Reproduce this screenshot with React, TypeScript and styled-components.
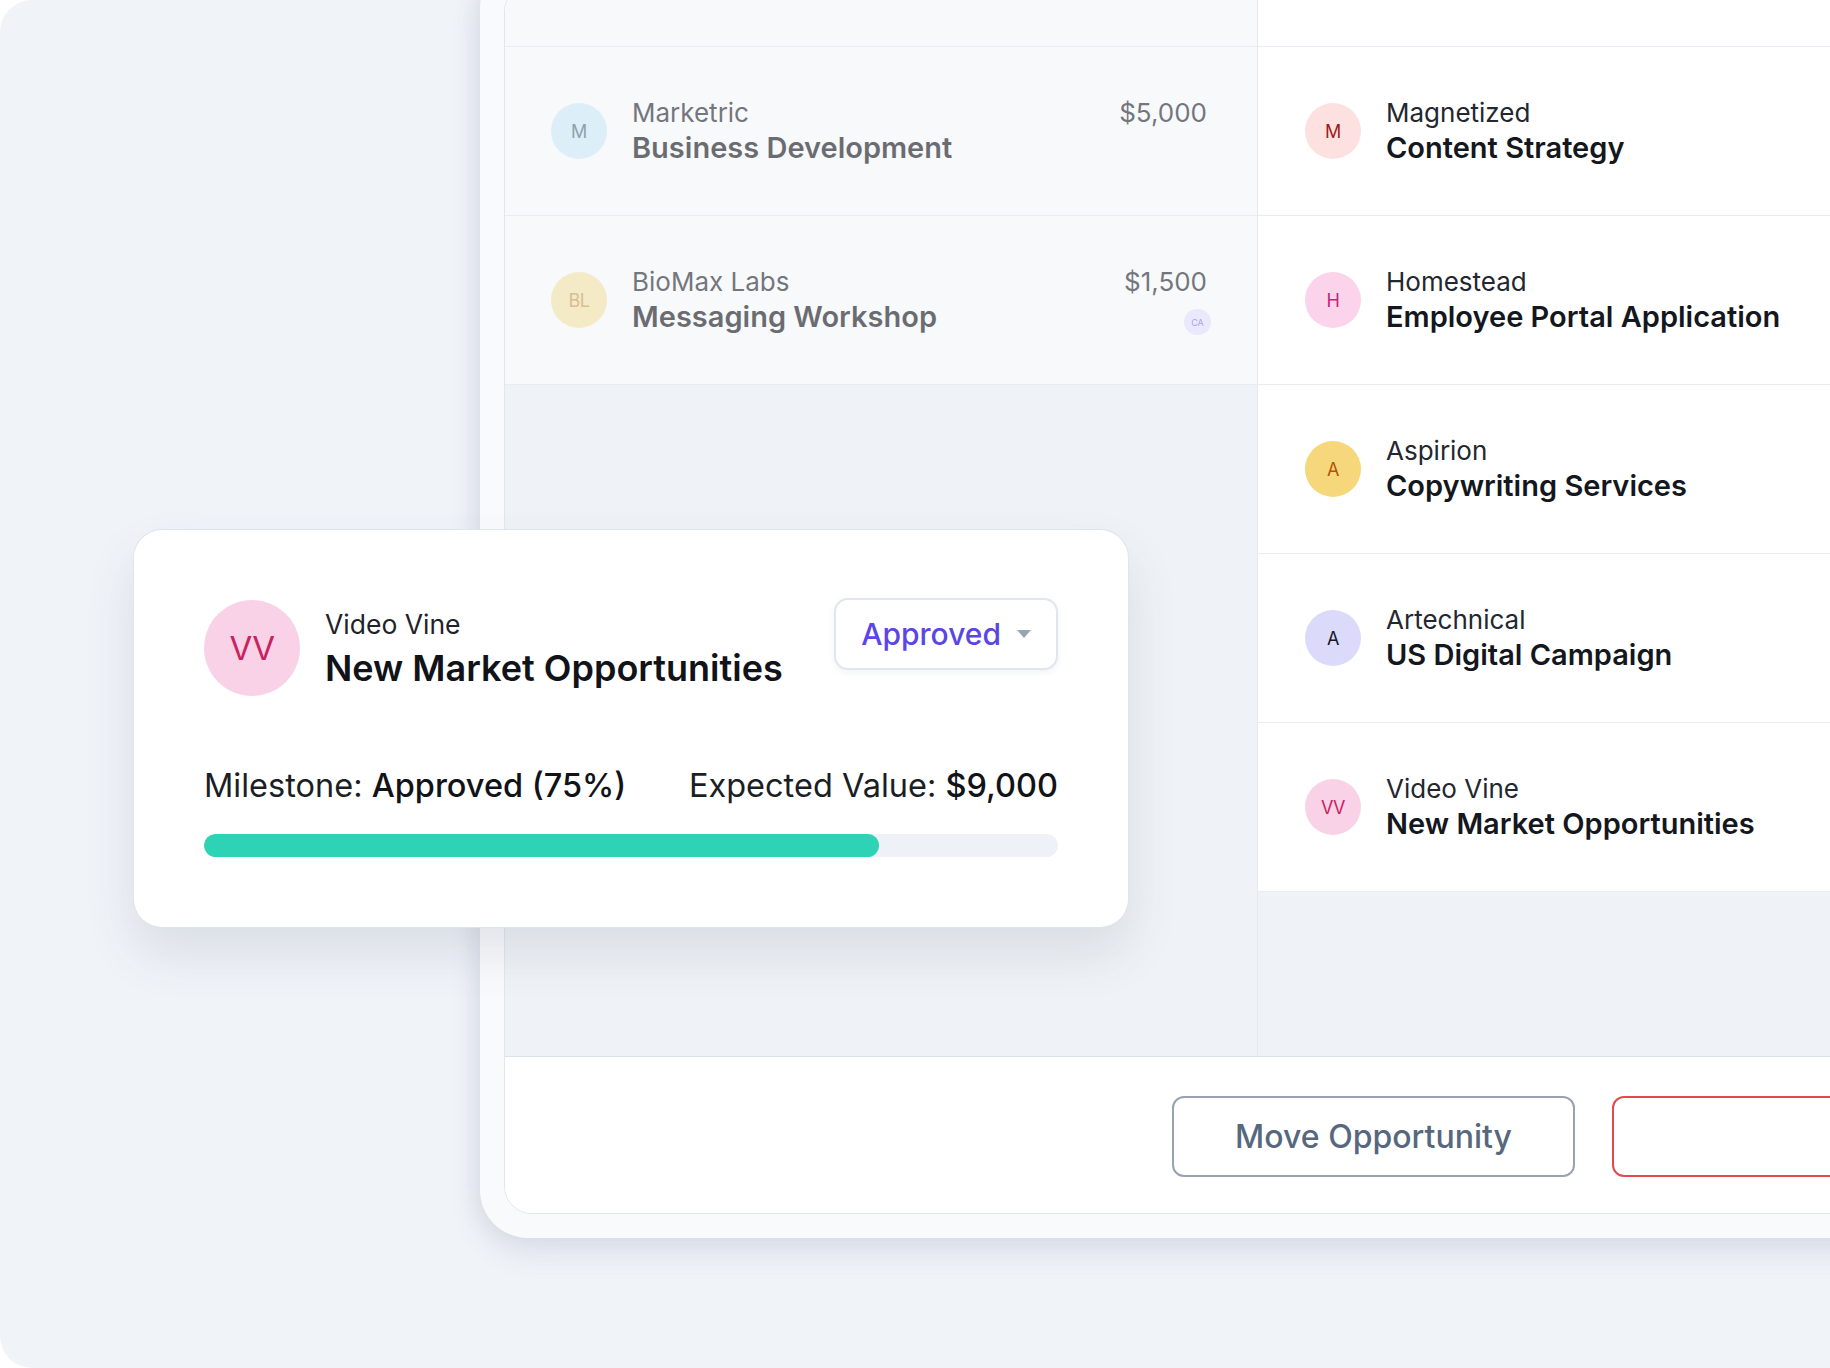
import styled, { createGlobalStyle } from 'styled-components';

const GlobalStyle = createGlobalStyle`
  html, body {
    margin: 0;
    padding: 0;
    background: #ffffff;
  }
  body {
    font-family: Inter, 'Noto Sans', 'Liberation Sans', sans-serif;
    -webkit-font-smoothing: antialiased;
  }
  * {
    box-sizing: border-box;
  }
`;

type Tone = { bg: string; fg: string };

const tones: Record<string, Tone> = {
  sky: { bg: '#cbe8f6', fg: '#4f6b7c' },
  sand: { bg: '#f2e2a6', fg: '#c49a55' },
  rose: { bg: '#fde1e1', fg: '#9b1c1c' },
  pink: { bg: '#fbd3ea', fg: '#c2267a' },
  amber: { bg: '#f6d77b', fg: '#b45309' },
  lilac: { bg: '#dcdafb', fg: '#111827' },
  blush: { bg: '#f9d2e7', fg: '#c8235f' },
};

type Deal = {
  initials: string;
  company: string;
  title: string;
  tone: string;
  amount?: string;
  owner?: string;
};

const stalledDeals: Deal[] = [
  { initials: 'M', company: 'Marketric', title: 'Business Development', tone: 'sky', amount: '$5,000' },
  { initials: 'BL', company: 'BioMax Labs', title: 'Messaging Workshop', tone: 'sand', amount: '$1,500', owner: 'CA' },
];

const approvedDeals: Deal[] = [
  { initials: 'M', company: 'Magnetized', title: 'Content Strategy', tone: 'rose' },
  { initials: 'H', company: 'Homestead', title: 'Employee Portal Application', tone: 'pink' },
  { initials: 'A', company: 'Aspirion', title: 'Copywriting Services', tone: 'amber' },
  { initials: 'A', company: 'Artechnical', title: 'US Digital Campaign', tone: 'lilac' },
  { initials: 'VV', company: 'Video Vine', title: 'New Market Opportunities', tone: 'blush' },
];

const Page = styled.div`
  position: relative;
  width: 1830px;
  height: 1368px;
  overflow: hidden;
  display: flex;
  align-items: flex-start;
  padding-left: 480px;
  background: #f0f3f8;
  border-radius: 32px 0 0 32px;
`;

const Frame = styled.div`
  flex-shrink: 0;
  display: flex;
  width: 1600px;
  height: 1278px;
  margin-top: -40px;
  padding: 24px;
  background: #f9fafc;
  border-radius: 48px;
  box-shadow: -6px 0 18px rgba(148, 163, 184, 0.12), 0 14px 30px rgba(100, 116, 139, 0.14);
`;

const Panel = styled.div`
  flex: 1;
  display: flex;
  flex-direction: column;
  background: #ffffff;
  border: 1px solid #e2e5ef;
  border-radius: 28px;
  overflow: hidden;
`;

const Board = styled.div`
  flex: 1;
  display: grid;
  grid-template-columns: 752px 1fr;
  background: #eff2f6;
`;

const Column = styled.div<{ $divider?: boolean }>`
  display: flex;
  flex-direction: column;
  border-left: ${({ $divider }) => ($divider ? '1px solid #e4e8ef' : 'none')};
`;

const ColumnHead = styled.div<{ $muted?: boolean }>`
  height: 62px;
  flex-shrink: 0;
  background: ${({ $muted }) => ($muted ? '#f8f9fb' : '#ffffff')};
  border-bottom: 1px solid #e9ecf1;
`;

const Row = styled.div<{ $muted?: boolean }>`
  height: 169px;
  flex-shrink: 0;
  display: flex;
  align-items: center;
  padding: ${({ $muted }) => ($muted ? '0 50px 0 46px' : '0 46px 0 47px')};
  background: ${({ $muted }) => ($muted ? '#f8f9fb' : '#ffffff')};
  border-bottom: 1px solid #e9ecf1;

  > * {
    opacity: ${({ $muted }) => ($muted ? 0.62 : 1)};
  }
`;

const Avatar = styled.div<{ $tone: Tone; $size: number; $font: number }>`
  flex-shrink: 0;
  width: ${({ $size }) => $size}px;
  height: ${({ $size }) => $size}px;
  border-radius: 50%;
  display: flex;
  align-items: center;
  justify-content: center;
  background: ${({ $tone }) => $tone.bg};
  color: ${({ $tone }) => $tone.fg};
  font-size: ${({ $font }) => $font}px;
  font-weight: 400;
  letter-spacing: -0.5px;
`;

const Info = styled.div`
  flex: 1;
  min-width: 0;
  margin-left: 25px;
  display: flex;
  flex-direction: column;
`;

const Company = styled.div`
  font-size: 26px;
  line-height: 34px;
  color: #23272f;
`;

const DealTitle = styled.div`
  font-size: 29px;
  line-height: 36px;
  font-weight: 600;
  color: #14171d;
  white-space: nowrap;
`;

const Meta = styled.div`
  height: 70px;
  display: flex;
  flex-direction: column;
  align-items: flex-end;
`;

const Amount = styled.div`
  font-size: 26px;
  line-height: 34px;
  color: #23272f;
`;

const Owner = styled.div`
  width: 27px;
  height: 27px;
  margin-top: 10px;
  margin-right: -4px;
  border-radius: 50%;
  display: flex;
  align-items: center;
  justify-content: center;
  background: #e3defc;
  color: #7c6fd8;
  font-size: 9px;
`;

const Footer = styled.div`
  height: 157px;
  flex-shrink: 0;
  display: flex;
  align-items: center;
  justify-content: flex-end;
  gap: 37px;
  padding: 3px 40px 0;
  background: #ffffff;
  border-top: 1px solid #dbe1e9;
`;

const OutlineButton = styled.button<{ $danger?: boolean }>`
  width: 403px;
  height: 81px;
  border-radius: 12px;
  border: 2px solid ${({ $danger }) => ($danger ? '#e5484d' : '#97a2b2')};
  background: #ffffff;
  color: #56677e;
  font-family: inherit;
  font-size: 32px;
  font-weight: 500;
  cursor: pointer;
`;

const Card = styled.div`
  position: absolute;
  left: 134px;
  top: 530px;
  width: 994px;
  padding: 70px;
  background: #ffffff;
  border-radius: 28px;
  box-shadow: 0 0 0 1px rgba(222, 227, 236, 0.9), 0 26px 50px rgba(71, 85, 105, 0.13);
`;

const CardHeader = styled.div`
  display: flex;
  align-items: flex-start;
  gap: 25px;
`;

const CardHeading = styled.div`
  flex: 1;
  align-self: center;
  display: flex;
  flex-direction: column;
`;

const CardCompany = styled.div`
  font-size: 26.5px;
  line-height: 36px;
  color: #1f2329;
`;

const CardTitle = styled.div`
  margin-top: 4px;
  font-size: 36px;
  line-height: 44px;
  font-weight: 600;
  color: #111318;
  white-space: nowrap;
`;

const StatusSelect = styled.button`
  margin-top: -2px;
  height: 72px;
  display: flex;
  align-items: center;
  gap: 16px;
  padding: 0 25px;
  background: #ffffff;
  border: 2px solid #e1e5ed;
  border-radius: 14px;
  box-shadow: 0 2px 6px rgba(148, 163, 184, 0.15);
  color: #5b46e5;
  font-family: inherit;
  font-size: 30px;
  font-weight: 500;
  cursor: pointer;
`;

const Stats = styled.div`
  margin-top: 70px;
  display: flex;
  justify-content: space-between;
  font-size: 32.5px;
  line-height: 40px;
  color: #1b1e24;
`;

const StatValue = styled.span`
  font-weight: 500;
  color: #111318;
`;

const Track = styled.div`
  margin-top: 28px;
  height: 23px;
  border-radius: 12px;
  background: #eef2f8;
  overflow: hidden;
`;

const Fill = styled.div`
  height: 100%;
  border-radius: 12px;
  background: #2ed3b5;
`;

const DealRow = ({ deal, muted }: { deal: Deal; muted?: boolean }) => (
  <Row $muted={muted}>
    <Avatar $tone={tones[deal.tone]} $size={56} $font={18}>
      {deal.initials}
    </Avatar>
    <Info>
      <Company>{deal.company}</Company>
      <DealTitle>{deal.title}</DealTitle>
    </Info>
    {deal.amount && (
      <Meta>
        <Amount>{deal.amount}</Amount>
        {deal.owner && <Owner>{deal.owner}</Owner>}
      </Meta>
    )}
  </Row>
);

const Caret = () => (
  <svg width="14" height="8" viewBox="0 0 14 8">
    <path d="M0 0h14L7 8z" fill="#99a3b3" />
  </svg>
);

const App = () => {
  const progress = 79;

  return (
    <>
      <GlobalStyle />
      <Page>
        <Frame>
          <Panel>
            <Board>
              <Column>
                <ColumnHead $muted />
                {stalledDeals.map((deal) => (
                  <DealRow key={deal.title} deal={deal} muted />
                ))}
              </Column>
              <Column $divider>
                <ColumnHead />
                {approvedDeals.map((deal) => (
                  <DealRow key={deal.title} deal={deal} />
                ))}
              </Column>
            </Board>
            <Footer>
              <OutlineButton>Move Opportunity</OutlineButton>
              <OutlineButton $danger />
            </Footer>
          </Panel>
        </Frame>

        <Card>
          <CardHeader>
            <Avatar $tone={tones.blush} $size={96} $font={33}>
              VV
            </Avatar>
            <CardHeading>
              <CardCompany>Video Vine</CardCompany>
              <CardTitle>New Market Opportunities</CardTitle>
            </CardHeading>
            <StatusSelect>
              Approved
              <Caret />
            </StatusSelect>
          </CardHeader>
          <Stats>
            <span>
              Milestone: <StatValue>Approved (75%)</StatValue>
            </span>
            <span>
              Expected Value: <StatValue>$9,000</StatValue>
            </span>
          </Stats>
          <Track>
            <Fill style={{ width: `${progress}%` }} />
          </Track>
        </Card>
      </Page>
    </>
  );
};

export default App;
